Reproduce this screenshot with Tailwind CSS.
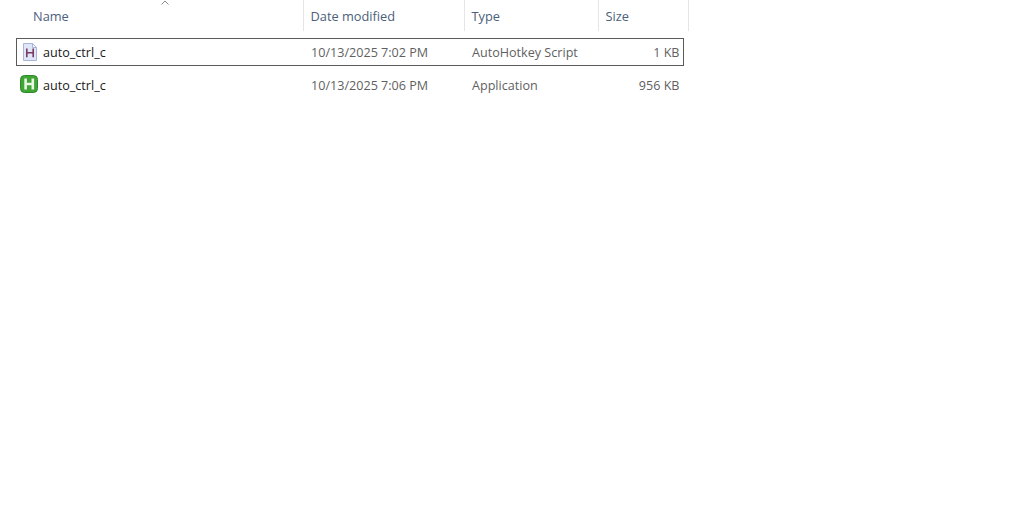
<!DOCTYPE html>
<html lang="en">
  <head>
    <meta charset="UTF-8" />
    <title>Explorer</title>
    <script src="https://cdn.jsdelivr.net/npm/@tailwindcss/browser@4"></script>
  </head>
  <body class="bg-white w-[1024px] h-[528px] overflow-hidden font-['Open_Sans','Noto_Sans',sans-serif] text-[12.6px]">
    <!-- column header -->
    <div class="relative flex h-[31px] w-[689px] text-[#4c607a] text-[12.8px] leading-[33px]">
      <svg class="absolute left-[161px] top-0" width="8" height="5" viewBox="0 0 8 5" fill="none" stroke="#8a8a8a"><path d="M0.5 4.5 L4 1 L7.5 4.5" /></svg>
      <div class="w-[304px] pl-[33px] border-r border-[#e5e5e5]">Name</div>
      <div class="w-[161px] pl-[6.5px] border-r border-[#e5e5e5]">Date modified</div>
      <div class="w-[134px] pl-[6.5px] border-r border-[#e5e5e5]">Type</div>
      <div class="w-[90px] pl-[6.5px] border-r border-[#e5e5e5]">Size</div>
    </div>
    <!-- rows -->
    <div class="ml-[16px] mt-[7px] w-[668px] flex flex-col gap-[5px] text-[#5f5f5f] leading-[29px]">
      <div class="flex items-center h-[28px] border border-[#5a5a5a]">
        <div class="w-[26px] pl-[5px] shrink-0">
          <svg width="16" height="18" viewBox="0 0 16 18" class="block">
            <path d="M1.5 0.5 H10.5 L14.5 4.5 V17.5 H1.5 Z" fill="#dfe6f7" stroke="#a9b4d6" />
            <path d="M10.5 0.5 V4.5 H14.5 Z" fill="#f7f9ff" stroke="#a9b4d6" />
            <path d="M4.8 5.5 V14.2 M11.2 5.5 V14.2 M4.8 9.8 H11.2" fill="none" stroke="#7b3b62" stroke-width="1.6" />
          </svg>
        </div>
        <div class="w-[268px] text-[#1a1a1a]">auto_ctrl_c</div>
        <div class="w-[161px]">10/13/2025 7:02 PM</div>
        <div class="w-[134px]">AutoHotkey Script</div>
        <div class="flex-1 text-right pr-[3.5px]">1 KB</div>
      </div>
      <div class="flex items-center h-[28px] border border-transparent">
        <div class="w-[26px] pl-[3px] shrink-0">
          <svg width="18" height="18" viewBox="0 0 18 18" class="block -translate-y-[1px]">
            <rect x="0.5" y="0.5" width="17" height="17" rx="4" fill="#3fa535" stroke="#2f8a2a" />
            <path d="M5.6 3.5 V14.5 M12.8 3.5 V14.5 M5.6 9 H12.8" fill="none" stroke="#e9f7e4" stroke-width="2.6" />
          </svg>
        </div>
        <div class="w-[268px] text-[#1a1a1a]">auto_ctrl_c</div>
        <div class="w-[161px]">10/13/2025 7:06 PM</div>
        <div class="w-[134px]">Application</div>
        <div class="flex-1 text-right pr-[3.5px]">956 KB</div>
      </div>
    </div>
  </body>
</html>
